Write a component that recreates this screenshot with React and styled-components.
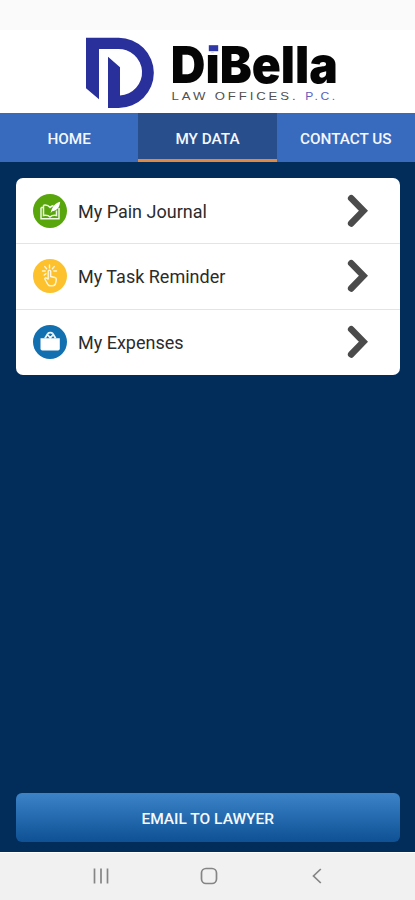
import styled, { createGlobalStyle } from "styled-components";

export default function App() {
  return (
    <>
      <GlobalStyle />
      <Tela>
        <StatusBar />
        <Header>
          <Logo />
        </Header>
        <Nav>
          <Tab>HOME</Tab>
          <Tab $active>MY DATA</Tab>
          <Tab>CONTACT US</Tab>
        </Nav>
        <Content>
          <List>
            <Item>
              <JournalIcon />
              <Label>My Pain Journal</Label>
              <Chevron />
            </Item>
            <Item>
              <TaskIcon />
              <Label>My Task Reminder</Label>
              <Chevron />
            </Item>
            <Item>
              <ExpensesIcon />
              <Label>My Expenses</Label>
              <Chevron />
            </Item>
          </List>
          <EmailButton>EMAIL TO LAWYER</EmailButton>
        </Content>
        <SystemBar>
          <svg width="18" height="18" viewBox="0 0 18 18">
            <path d="M2.5 1.5v15M9 1.5v15M15.5 1.5v15" />
          </svg>
          <svg width="18" height="18" viewBox="0 0 18 18">
            <rect x="1.5" y="1.5" width="15" height="15" rx="4.5" />
          </svg>
          <svg width="18" height="18" viewBox="0 0 18 18">
            <path d="M12.8 2L5.5 9l7.3 7" />
          </svg>
        </SystemBar>
      </Tela>
    </>
  );
}

function Logo() {
  return (
    <svg width="252" height="72" viewBox="86 37 252 72">
      <path
        fill="#29309b"
        d="M86 37.7H118.7A35.15 35.15 0 0 1 118.7 108H108V56.7L120 67.3V95.6A23.3 23.3 0 0 0 117.4 49H99V99.3L86 88.3Z"
      />
      <Wordmark x="170.8" y="82.6" textLength="167" lengthAdjust="spacingAndGlyphs">
        DiBella
      </Wordmark>
      <rect x="207" y="42" width="12.8" height="10.4" fill="#fff" />
      <rect x="208.8" y="45.2" width="9.4" height="6" fill="#3038a8" />
      <Tagline x="171.5" y="100.4" textLength="127" lengthAdjust="spacingAndGlyphs">
        LAW OFFICES.
      </Tagline>
      <Tagline x="305.3" y="100.4" textLength="32.5" lengthAdjust="spacingAndGlyphs" $blue>
        P.C.
      </Tagline>
    </svg>
  );
}

function JournalIcon() {
  return (
    <Round $color="#58a60b" viewBox="0 0 34 34">
      <path
        d="M8 13.5v11.3h18V14M8 13.5h2.5M10.5 11.2c3-.6 5 .2 6.5 2.2 1.2-1.2 2.2-1.7 3.5-2M10.5 11.2v10.3c3-.5 5 0 6.5 1.5 1.6-1.5 3.5-2 6.5-1.5v-5"
        fill="none"
        stroke="#eef8e5"
        strokeWidth="1.5"
      />
      <path d="M27.2 7.8c-4.5 1-8.2 4.5-9.6 11.5l1.5-2c4.8-.6 7.5-3.7 8.1-9.5z" fill="#fff" />
    </Round>
  );
}

function TaskIcon() {
  return (
    <Round $color="#fcc12c" viewBox="0 0 34 34">
      <g fill="none" stroke="#fff6d9" strokeWidth="1.4" strokeLinecap="round" strokeLinejoin="round">
        <path d="M16.5 6v3M11.8 7.6l1.8 2.2M21.2 7.6l-1.8 2.2M9.5 12h2.7M20.8 12h2.7M11.2 16l1.8-1.4" />
        <path d="M15.2 20v-7.5c0-1.8 2.5-1.8 2.5 0v5l4.2 1c1 .3 1.5 1 1.4 2l-.6 3.3c-.3 2-1.3 3-3.3 3h-2c-1.3 0-2-.5-2.6-1.5l-2.8-4.8c-.7-1.4.6-2.2 1.6-1.3z" />
      </g>
    </Round>
  );
}

function ExpensesIcon() {
  return (
    <Round $color="#1270b0" viewBox="0 0 34 34">
      <path d="M7.5 13.2h19.3v10.6q0 1.8-1.8 1.8H9.3q-1.8 0-1.8-1.8z" fill="#fff" />
      <path
        d="M12 13.3l2.3-3.8 3 3.3 3-3.3 2.3 3.8M14.8 8.6c1.2-1.4 3.8-1.4 5 0"
        fill="none"
        stroke="#eaf5fc"
        strokeWidth="1.8"
      />
    </Round>
  );
}

function Chevron() {
  return (
    <Arrow width="24" height="34" viewBox="0 0 24 34">
      <path d="M5.2 4.3L17.4 16.8 5.2 29.4" />
    </Arrow>
  );
}

const GlobalStyle = createGlobalStyle`
  * {
    box-sizing: border-box;
  }
  body {
    margin: 0;
    font-family: Roboto, sans-serif;
  }
`;

const Tela = styled.div`
  width: 100%;
  height: 900px;
  display: flex;
  flex-direction: column;
  overflow: hidden;
  background: #022d5b;
`;

const StatusBar = styled.div`
  height: 30px;
  background: #fafafa;
`;

const Header = styled.header`
  height: 83px;
  padding: 7px 0 0 86px;
  background: #fff;
  svg {
    display: block;
    overflow: visible;
  }
`;

const Wordmark = styled.text`
  font-family: Inter, sans-serif;
  font-size: 51.5px;
  font-weight: 900;
  fill: #050505;
`;

const Tagline = styled.text`
  font-family: "Liberation Sans", sans-serif;
  font-size: 11.8px;
  letter-spacing: 2.6px;
  fill: ${(props) => (props.$blue ? "#5a5fc0" : "#505050")};
`;

const Nav = styled.nav`
  height: 49px;
  display: grid;
  grid-template-columns: repeat(3, 1fr);
`;

const Tab = styled.div`
  display: flex;
  align-items: center;
  justify-content: center;
  padding-top: ${(props) => (props.$active ? "5px" : "2px")};
  border-bottom: ${(props) => (props.$active ? "3px solid #e28a40" : "none")};
  background: ${(props) => (props.$active ? "#284f8b" : "#386abd")};
  color: #f3f7ff;
  font-size: 15.3px;
  font-weight: 500;
`;

const Content = styled.main`
  flex: 1;
  display: flex;
  flex-direction: column;
  justify-content: space-between;
  padding: 16px 15.5px 10px 16px;
`;

const List = styled.div`
  height: 196.5px;
  display: flex;
  flex-direction: column;
  border-radius: 7px;
  background: #fff;
`;

const Item = styled.div`
  height: 65px;
  display: flex;
  align-items: center;
  padding: 0 30px 0 17px;
  & + & {
    height: 65.5px;
    border-top: 1px solid #e4e4e4;
  }
`;

const Round = styled.svg`
  width: 34px;
  height: 34px;
  border-radius: 50%;
  background: ${(props) => props.$color};
`;

const Label = styled.span`
  flex: 1;
  margin: 1px 0 0 11px;
  font-size: 18px;
  color: #2b2b2b;
`;

const Arrow = styled.svg`
  path {
    fill: none;
    stroke: #4b4b4b;
    stroke-width: 6.6;
    stroke-linecap: round;
  }
`;

const EmailButton = styled.button`
  height: 49px;
  padding: 2px 0 0;
  border: none;
  border-radius: 6px;
  background: linear-gradient(#3c83c7, #0e5195);
  color: #f5f9ff;
  font-family: inherit;
  font-size: 15.5px;
  font-weight: 500;
`;

const SystemBar = styled.footer`
  height: 48px;
  display: flex;
  justify-content: center;
  align-items: center;
  gap: 90px;
  padding: 0 0 2px 2px;
  border-top: 1px solid #fff;
  background: #f1f1f1;
  svg {
    fill: none;
    stroke: #858585;
    stroke-width: 1.7;
  }
`;
